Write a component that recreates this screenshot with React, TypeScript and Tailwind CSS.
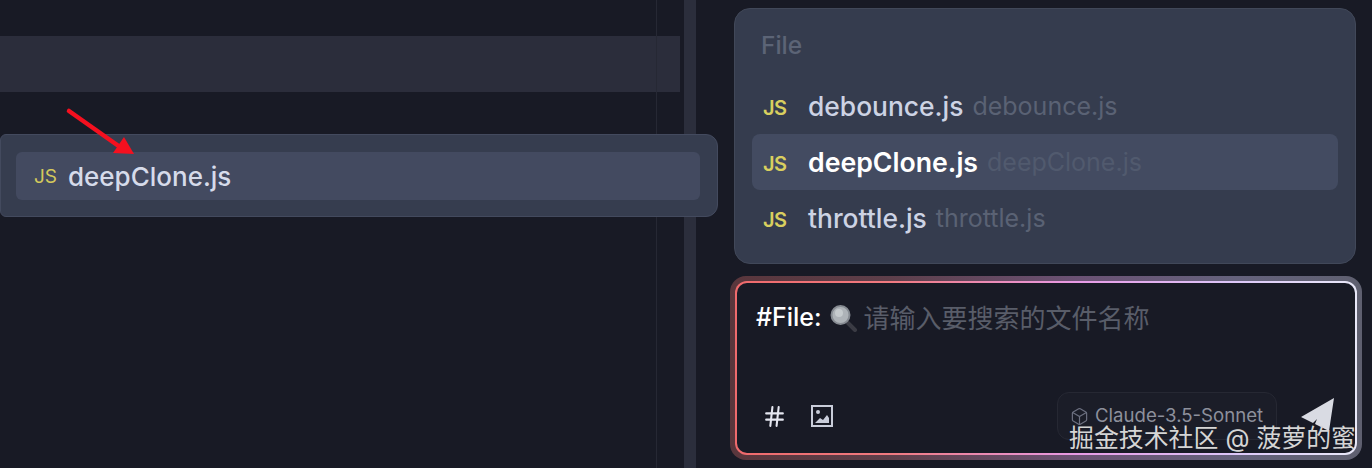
import { Box, Hash } from "lucide-react"

const sans = "font-['Inter','Noto_Sans_CJK_SC',sans-serif]"

function FileRow({ name, active }: { name: string; active?: boolean }) {
  return (
    <div className={`flex items-center h-[56px] pl-[11px] rounded-lg ${active ? "bg-[#434b61]" : ""}`}>
      <span className="w-[26px] text-[20px] font-semibold text-[#d9cf5f] leading-none mt-[4px] tracking-[-0.5px]">JS</span>
      <span className={`ml-[19px] leading-none ${active ? "text-[26.7px] font-semibold text-white" : "text-[26.4px] font-medium text-[#cdd3e4]"}`}>
        {name}
      </span>
      <span className={`ml-[9px] text-[25px] leading-none ${active ? "text-[#515a6e]" : "text-[#5a6274]"}`}>{name}</span>
    </div>
  )
}

export default function App() {
  return (
    <div className={`relative flex w-[1372px] h-[468px] overflow-hidden bg-[#181a25] ${sans}`}>
      {/* Left pane */}
      <div className="relative w-[684px] shrink-0 pt-[36px]">
        <div className="h-[56px] mr-[4px] bg-[#2b2d3b]" />
        <div className="relative z-10 mt-[42px] w-[718px] h-[83px] pt-[17px] pl-[15px] pr-[17px] rounded-r-xl rounded-l-md bg-[#363d4f] border border-[#434a5e]">
          <div className="flex items-center h-[48px] pl-[18px] rounded-md bg-[#434a60]">
            <span className="w-[24px] text-[19px] text-[#d3c95c] leading-none">JS</span>
            <span className="ml-[10px] mt-[2px] text-[26px] font-medium leading-none text-[#d6dbea]">deepClone.js</span>
          </div>
        </div>
        <div className="absolute left-[656px] top-0 bottom-0 w-px bg-[#262834]" />
        {/* Red arrow */}
        <svg className="absolute z-20 left-[64px] top-[106px]" width="74" height="52" viewBox="0 0 74 52">
          <path d="M5 5 L56 41" stroke="#f5101f" strokeWidth="4.5" strokeLinecap="round" />
          <path d="M70 48 L49 47 L60 31 Z" fill="#f5101f" />
        </svg>
      </div>

      {/* Divider */}
      <div className="w-[12px] shrink-0 bg-[#2b2e3c]" />

      {/* Right pane */}
      <div className="flex-1 pl-[38px] pr-[16px] pt-[8px]">
        <div className="h-[256px] px-[17px] pt-[21px] rounded-2xl bg-[#353c4e] border border-[#414859]">
          <div className="pl-[9px] h-[30px] text-[24.5px] font-medium leading-[30px] text-[#5c6476]">File</div>
          <div className="mt-[18px]">
            <FileRow name="debounce.js" />
            <FileRow name="deepClone.js" active />
            <FileRow name="throttle.js" />
          </div>
        </div>

        {/* Input with glow border */}
        <div className="mt-[12px] -ml-[4px] -mr-[6px] h-[184px] p-[5px] rounded-2xl bg-[linear-gradient(90deg,#59363c_0%,#5e3f4a_25%,#6b5274_55%,#65627c_80%,#5f6070_100%)]">
          <div className="h-full p-[2px] rounded-xl bg-[linear-gradient(90deg,#ef6a6c_0%,#f07a80_25%,#e79ae6_55%,#dcc6f8_80%,#e8e8f8_100%)]">
            <div className="relative flex flex-col justify-between h-full rounded-[10px] bg-[#181a25] pl-[19px] pr-[19px] pt-[20px] pb-[13px]">
              <div className="flex items-center h-[30px]">
                <span className="text-[25px] font-medium text-white">#File:</span>
                <svg className="ml-[8px]" width="28" height="28" viewBox="0 0 28 28">
                  <path d="M16 17 L25 26" stroke="#3a3b44" strokeWidth="4" strokeLinecap="round" />
                  <circle cx="10.5" cy="11" r="9" fill="#aeb3b8" stroke="#868b92" strokeWidth="2" />
                  <circle cx="9" cy="9" r="4" fill="#c6cbce" />
                </svg>
                <span className="ml-[6px] text-[26px] text-[#595d69]">请输入要搜索的文件名称</span>
              </div>
              <div className="flex items-center justify-between">
                <div className="flex items-center pl-[6px]">
                  <Hash size={25} strokeWidth={2} className="text-[#e4e6f0]" />
                  <svg className="ml-[23px]" width="24" height="24" viewBox="0 0 24 24">
                    <rect x="2" y="2" width="20" height="20" fill="none" stroke="#c9cdda" strokeWidth="2" />
                    <circle cx="8" cy="8" r="2" fill="#c9cdda" />
                    <path d="M5 19 L10 14 L13 16 L17 11 L19 14 V19 H5 Z" fill="#c9cdda" />
                  </svg>
                </div>
                <div className="flex items-center">
                  <div className="flex items-center h-[48px] w-[220px] pl-[12px] rounded-xl bg-[#1b1d28] border border-[#262833]">
                    <Box size={19} strokeWidth={1.5} className="text-[#6c7080]" />
                    <span className="ml-[6px] text-[18.6px] text-[#8d909c] leading-none -mt-[2px] whitespace-nowrap">Claude-3.5-Sonnet</span>
                  </div>
                  <svg className="ml-[23px] -mt-[2px]" width="36" height="36" viewBox="0 0 36 36">
                    <path d="M34 1 L1 20 L13 26 L17 22 L15 27 L29 34 Z" fill="#d9dbe3" />
                  </svg>
                </div>
              </div>
            </div>
          </div>
        </div>
      </div>

      {/* Watermark */}
      <div className="absolute z-30 right-[16px] top-[423px] text-[24.9px] leading-[30px] whitespace-nowrap text-[#d5d5d5]">
        掘金技术社区 @ 菠萝的蜜
      </div>
    </div>
  )
}
